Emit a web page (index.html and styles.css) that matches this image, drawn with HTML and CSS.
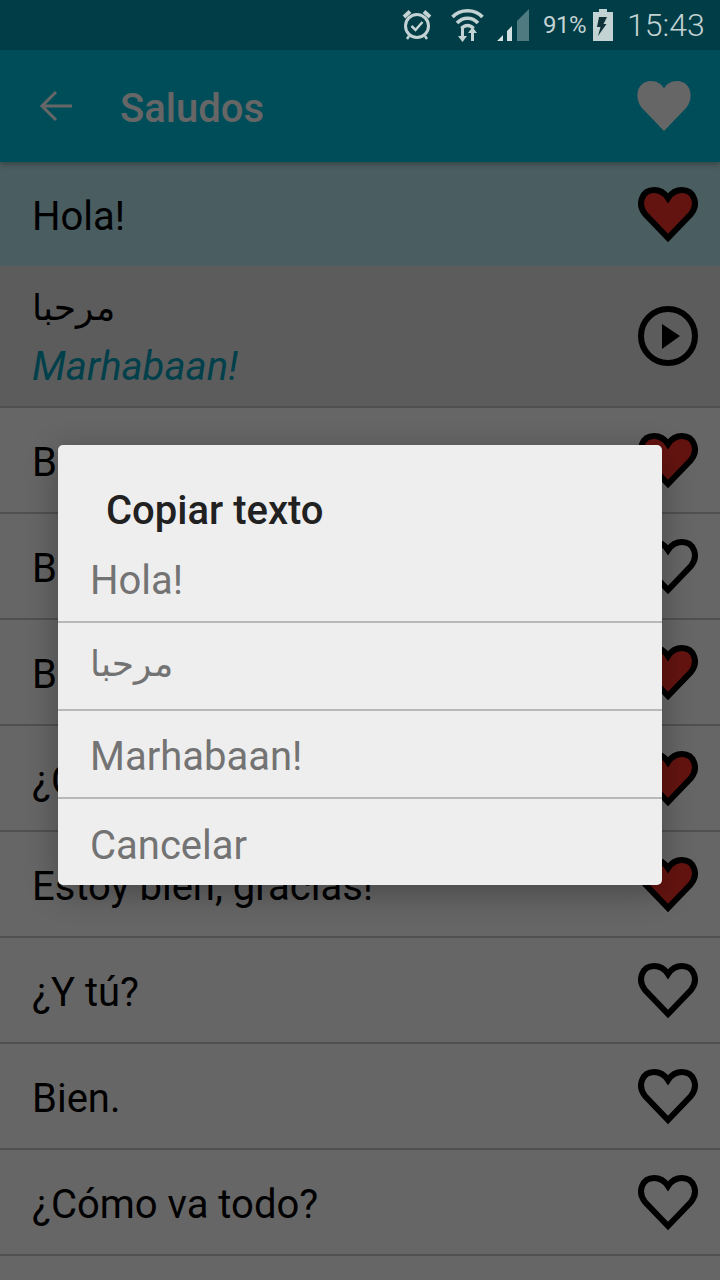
FILE: index.html
```html
<!DOCTYPE html>
<html lang="es">
<head>
<meta charset="utf-8">
<title>Saludos</title>
<link rel="stylesheet" href="styles.css">
</head>
<body>
<svg class="defs" width="0" height="0" aria-hidden="true">
  <symbol id="heart" viewBox="0 0 60 56">
    <path d="M30 51 L7 27 C-1 17 4 3 16 3 C22 3 27 6.500 30 11 C33 6.500 38 3 44 3 C56 3 61 17 53 27 Z"/>
  </symbol>
</svg>
<div class="screen">
  <header class="status">
    <svg class="st-alarm" width="30" height="32" viewBox="0 0 30 32" fill="none" stroke="#c3d2d2">
      <circle cx="15" cy="18" r="11.500" stroke-width="3"/>
      <path d="M9.500 18 L13.500 22 L20.500 14" stroke-width="2.500"/>
      <path d="M2 9 L8 3.500 M28 9 L22 3.500" stroke-width="4"/>
      <path d="M7 28 L5 31 M23 28 L25 31" stroke-width="2.500"/>
    </svg>
    <svg class="st-wifi" width="33" height="34" viewBox="0 0 33 34" fill="none" stroke="#c3d2d2" stroke-width="3.500">
      <path d="M1.500 9 C9 0.500 24 0.500 31.500 9"/>
      <path d="M6 15 C12 8.500 21 8.500 27 15"/>
      <path d="M10.500 20.500 C14 16.500 19 16.500 22.500 20.500"/>
      <path d="M7 28 L11.500 34 L16 28 Z M17 25 L21.500 19 L26 25 Z" fill="#c3d2d2" stroke="none"/>
      <path d="M11.500 20 V30 M21.500 23 V33" stroke-width="3"/>
    </svg>
    <svg class="st-signal" width="33" height="34" viewBox="0 0 33 34">
      <path d="M20 13 L32 1 V33 H20 Z" fill="#4f7a80"/>
      <path d="M0 33 L6 27 V33 Z M10 33 V23 L15 18 V33 Z" fill="#d5e0e0"/>
    </svg>
    <span class="st-pct">91%</span>
    <svg class="st-batt" width="20" height="32" viewBox="0 0 20 32">
      <path d="M6 0 H14 V3 H20 V32 H0 V3 H6 Z" fill="#c3d2d2"/>
      <path d="M6 8 H14 L10.500 15 H13.500 L5 27 L7.500 18 H4 Z" fill="#10333a"/>
    </svg>
    <span class="st-time">15:43</span>
  </header>
  <div class="app">
    <div class="bar">
      <svg class="back" width="34" height="32" viewBox="0 0 34 32" fill="none" stroke="#fff" stroke-width="3">
        <path d="M33 16 H3 M17 2 L3 16 L17 30"/>
      </svg>
      <h1 class="title">Saludos</h1>
      <svg class="fav" width="56" height="50" viewBox="0 0 60 54" fill="#fff">
        <path d="M30 54 L6 29 C-3 18 1 0 16 0 C22 0 27 3 30 8 C33 3 38 0 44 0 C59 0 63 18 54 29 Z"/>
      </svg>
    </div>
    <ul class="list">
      <li class="row first"><span class="txt">Hola!</span><svg class="ic red"><use href="#heart"/></svg></li>
      <li class="row tall">
        <div><div class="ar">مرحبا</div><div class="tr">Marhabaan!</div></div>
        <svg class="ic" viewBox="0 0 60 60" fill="none" stroke="#000" stroke-width="6"><circle cx="30" cy="30" r="27"/><path d="M24 18 L42 30 L24 43 Z" fill="#000" stroke="none"/></svg>
      </li>
      <li class="row"><span class="txt">Buenos días!</span><svg class="ic red"><use href="#heart"/></svg></li>
      <li class="row"><span class="txt">Buenas tardes!</span><svg class="ic"><use href="#heart"/></svg></li>
      <li class="row"><span class="txt">Buenas noches!</span><svg class="ic red"><use href="#heart"/></svg></li>
      <li class="row"><span class="txt">¿Cómo estás?</span><svg class="ic red"><use href="#heart"/></svg></li>
      <li class="row"><span class="txt">Estoy bien, gracias!</span><svg class="ic red"><use href="#heart"/></svg></li>
      <li class="row"><span class="txt">¿Y tú?</span><svg class="ic"><use href="#heart"/></svg></li>
      <li class="row"><span class="txt">Bien.</span><svg class="ic"><use href="#heart"/></svg></li>
      <li class="row"><span class="txt">¿Cómo va todo?</span><svg class="ic"><use href="#heart"/></svg></li>
    </ul>
  </div>
  <div class="scrim"></div>
  <div class="dialog">
    <h2 class="d-title">Copiar texto</h2>
    <div class="d-item d-first">Hola!</div>
    <div class="d-item d-ar">مرحبا</div>
    <div class="d-item">Marhabaan!</div>
    <div class="d-item d-last">Cancelar</div>
  </div>
</div>
</body>
</html>
```
FILE: styles.css
```css
* { box-sizing: border-box; }
html, body { margin: 0; padding: 0; }
body { width: 720px; height: 1280px; overflow: hidden; font-family: Roboto, "DejaVu Sans", sans-serif; background: #fff; }
.defs { position: absolute; }
.screen { position: relative; width: 720px; height: 1280px; overflow: hidden; display: flex; flex-direction: column; }

.status { position: relative; z-index: 3; height: 50px; flex: none; background: #003d47; display: flex; align-items: center; color: #c3d2d2; padding-left: 402px; }
.st-alarm { margin-top: -2px; }
.st-wifi { margin-left: 19px; margin-top: -1px; }
.st-signal { margin-left: 13px; margin-top: -1px; }
.st-pct { margin-left: 13px; font-size: 24px; line-height: 50px; letter-spacing: -0.5px; }
.st-batt { margin-left: 7px; }
.st-time { margin-left: 14px; font-size: 32px; font-weight: 300; line-height: 50px; }

.app { flex: 1; display: flex; flex-direction: column; min-height: 0; }
.bar { position: relative; z-index: 1; height: 112px; flex: none; background: #00c1e2; display: flex; align-items: center; padding-left: 39px; padding-right: 28px; box-shadow: 0 2px 6px rgba(0,0,0,.3); }
.back { flex: none; }
.title { margin: 4px 0 0 47px; flex: 1; color: #fff; font-size: 40px; font-weight: 500; }
.fav { flex: none; }

.list { list-style: none; margin: 0; padding: 0; background: #fff; }
.row { height: 106px; display: flex; align-items: center; justify-content: space-between; padding: 0 22px 0 32px; border-bottom: 2px solid #c8c8c8; }
.row.first { height: 104px; background: #b9e9f0; border-bottom: 0; }
.row.tall { height: 142px; background: #e6e6e6; }
.txt { color: #000; font-size: 40px; line-height: 47px; padding-top: 4px; }
.ar { color: #000; font-family: "DejaVu Sans", sans-serif; font-size: 36px; line-height: 46px; padding-top: 8px; }
.tr { color: #00a0bc; font-size: 40px; font-style: italic; line-height: 56px; padding-top: 8px; }
.ic { width: 60px; height: 56px; flex: none; fill: none; stroke: #000; stroke-width: 6px; margin-top: 2px; }
.tall .ic { height: 60px; margin-top: 0; }
.ic.red { fill: #fa3228; }

.scrim { position: absolute; inset: 0; z-index: 2; background: rgba(0,0,0,.6); }
.dialog { position: absolute; z-index: 4; left: 58px; top: 445px; width: 604px; height: 440px; background: #eee; border-radius: 5px; box-shadow: 0 8px 32px rgba(0,0,0,.3); display: flex; flex-direction: column; }
.d-title { margin: 0; padding: 43px 0 0 48px; height: 89px; font-size: 40px; font-weight: 500; line-height: 46px; color: #212121; }
.d-item { height: 88px; padding: 5px 0 0 32px; display: flex; align-items: center; font-size: 40px; color: #737373; border-bottom: 2px solid #b8b8b8; }
.d-first { height: 89px; padding-top: 6px; padding-bottom: 0; }
.d-ar { font-family: "DejaVu Sans", sans-serif; font-size: 36px; padding: 0 0 6px 32px; }
.d-last { border-bottom: 0; flex: 1; padding-top: 6px; }
```
